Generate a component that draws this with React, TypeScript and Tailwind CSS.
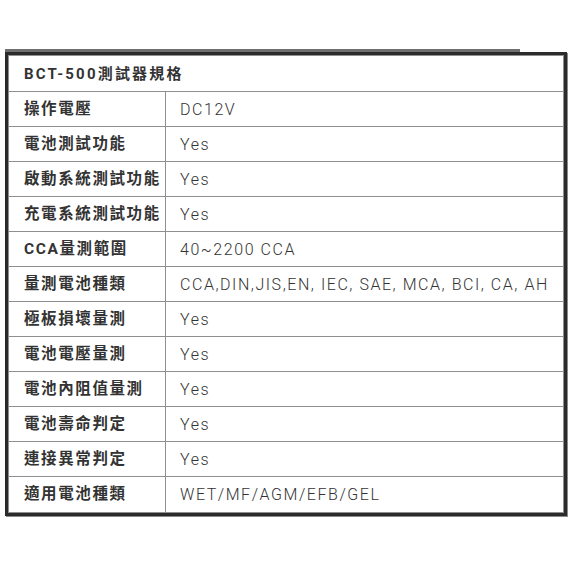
const rows: [string, string][] = [
  ['操作電壓', 'DC12V'],
  ['電池測試功能', 'Yes'],
  ['啟動系統測試功能', 'Yes'],
  ['充電系統測試功能', 'Yes'],
  ['CCA量測範圍', '40~2200 CCA'],
  ['量測電池種類', 'CCA,DIN,JIS,EN, IEC, SAE, MCA, BCI, CA, AH'],
  ['極板損壞量測', 'Yes'],
  ['電池電壓量測', 'Yes'],
  ['電池內阻值量測', 'Yes'],
  ['電池壽命判定', 'Yes'],
  ['連接異常判定', 'Yes'],
  ['適用電池種類', 'WET/MF/AGM/EFB/GEL'],
];

export default function App() {
  return (
    <div
      className="h-[571px] w-[571px] bg-white pl-[5px] pt-[49px]"
      style={{ fontFamily: "Roboto, 'Noto Sans CJK TC', sans-serif" }}
    >
      <div className="h-[3px] w-[515px] bg-[#6f6f6f]" />
      <div className="w-[562px] border-[3px] border-[#2b2b2b] shadow-[1px_1px_0_#8a8a8a]">
        <div className="border border-[#8f8f8f]">
          <div className="flex h-[36px] items-center border-b border-[#8f8f8f] pl-[15px] pt-[1px] text-[15px] font-bold tracking-[2.2px] text-[#333]">
            BCT-500測試器規格
          </div>
          {rows.map(([label, value], i) => (
            <div
              key={label}
              className={
                i < rows.length - 1
                  ? 'flex h-[35px] border-b border-[#8f8f8f]'
                  : 'flex h-[35px]'
              }
            >
              <div className="flex w-[157px] shrink-0 items-center whitespace-nowrap border-r border-[#8f8f8f] pl-[15px] pt-[1px] text-[15.5px] font-bold tracking-[1.6px] text-[#333]">
                {label}
              </div>
              <div className="flex items-center whitespace-nowrap pl-[14px] pt-[1px] text-[16px] font-light tracking-[1.55px] text-[#333]">
                {value}
              </div>
            </div>
          ))}
        </div>
      </div>
    </div>
  );
}
